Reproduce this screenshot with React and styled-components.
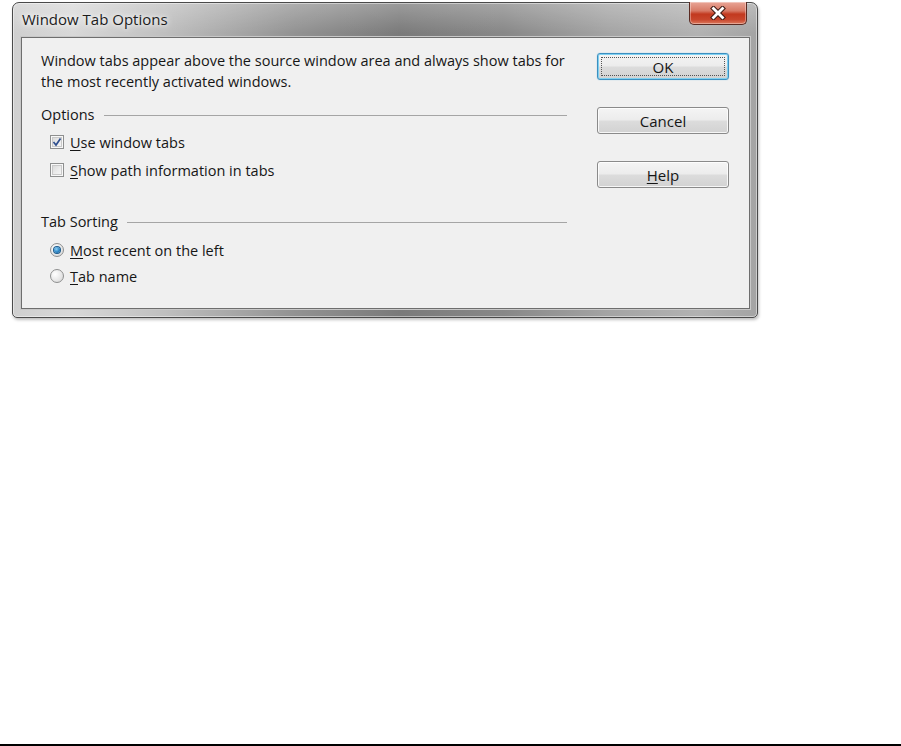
import React from "react";
import styled, { createGlobalStyle } from "styled-components";

const Global = createGlobalStyle`
  html, body { margin: 0; padding: 0; background: #fff; }
  body { font-family: "Open Sans", "Noto Sans", "Liberation Sans", sans-serif; }
`;

const Page = styled.div`
  box-sizing: border-box;
  height: 746px;
  padding: 2px 0 0 12px;
  border-bottom: 2px solid #000;
`;

const Window = styled.div`
  box-sizing: border-box;
  width: 746px;
  height: 316px;
  display: flex;
  flex-direction: column;
  border: 1px solid #4a4a4a;
  border-radius: 7px 7px 5px 5px;
  background:
    linear-gradient(180deg, rgba(255,255,255,0.25) 0px, rgba(255,255,255,0) 30px),
    linear-gradient(90deg, #cfcfcf 0%, #d8d8d8 8%, #c0c0c0 20%, #929292 38%, #7a7a7a 52%, #888 66%, #a4a4a4 80%, #b2b2b2 92%, #a4a4a4 100%);
  box-shadow: inset 0 0 0 1px rgba(255,255,255,0.45), 1px 2px 3px rgba(0,0,0,0.25);
`;

const TitleBar = styled.div`
  height: 34px;
  display: flex;
  align-items: flex-start;
  justify-content: space-between;
  padding: 0 9px 0 9px;
`;

const Title = styled.div`
  margin-top: 6px;
  font-size: 15px;
  color: #1c1c1c;
  text-shadow: 0 0 8px #fff, 0 0 4px #fff;
`;

const CloseButton = styled.div`
  box-sizing: border-box;
  width: 58px;
  height: 23px;
  margin-top: -1px;
  margin-right: 1px;
  border: 1px solid #5a2a22;
  border-top: none;
  border-radius: 0 0 5px 5px;
  background: linear-gradient(180deg, #e9a596 0%, #d77a66 40%, #c2391f 55%, #c8462c 80%, #dc7a5e 100%);
  box-shadow: inset 0 0 0 1px rgba(255,255,255,0.35);
  display: flex;
  align-items: center;
  justify-content: center;
`;

const Client = styled.div`
  box-sizing: border-box;
  flex: 1;
  margin: 0 7px 8px 8px;
  border: 1px solid #6e6e6e;
  background: #f0f0f0;
  display: flex;
  justify-content: space-between;
  padding: 0 20px 0 19px;
  box-shadow: 0 0 0 1px #c8c8c8;
`;

const LeftColumn = styled.div`
  width: 526px;
  display: flex;
  flex-direction: column;
  font-size: 14.5px;
  color: #161616;
`;

const Description = styled.p`
  margin: 12px 0 0 0;
  line-height: 21px;
  white-space: nowrap;
`;

const GroupHeader = styled.div`
  display: flex;
  align-items: center;
  gap: 9px;
  margin-top: ${(p) => p.$top}px;
  height: 20px;
  &::after {
    content: "";
    flex: 1;
    height: 1px;
    background: #a5a5a5;
    margin-top: 2px;
  }
`;

const OptionRow = styled.label`
  display: flex;
  align-items: center;
  gap: 6px;
  margin-left: 9px;
  height: 20px;
  margin-top: ${(p) => p.$top}px;
`;

const Box = styled.span`
  box-sizing: border-box;
  width: 14px;
  height: 14px;
  border: 1px solid #8e8f8f;
  background: linear-gradient(135deg, #d4d4d4 0%, #ececec 55%, #fafafa 100%);
  box-shadow: inset 0 0 0 1px #f8f8f8, inset 0 0 0 2px #c9c9c9;
  display: flex;
  align-items: center;
  justify-content: center;
`;

const Radio = styled.span`
  box-sizing: border-box;
  width: 14px;
  height: 14px;
  border-radius: 50%;
  border: 1px solid #8e8f8f;
  background: radial-gradient(circle at 35% 35%, #fff 0%, #e6e6e6 60%, #cfcfcf 100%);
  display: flex;
  align-items: center;
  justify-content: center;
  &::after {
    content: "";
    display: ${(p) => (p.$on ? "block" : "none")};
    width: 6px;
    height: 6px;
    border-radius: 50%;
    background: radial-gradient(circle at 40% 35%, #8fd0f5 0%, #2a85c5 55%, #0d4f8a 100%);
    box-shadow: 0 0 0 1px #1b5a8c;
  }
`;

const Mn = styled.u`
  text-decoration: underline;
  text-underline-offset: 2px;
`;

const RightColumn = styled.div`
  display: flex;
  flex-direction: column;
  gap: 27px;
  padding-top: 15px;
`;

const Button = styled.div`
  box-sizing: border-box;
  width: 132px;
  height: 27px;
  border: 1px solid ${(p) => (p.$default ? "#3c8fc0" : "#8a8a8a")};
  border-radius: 3px;
  background: linear-gradient(180deg, #f4f4f4 0%, #ececec 48%, #dcdcdc 52%, #d2d2d2 100%);
  box-shadow: ${(p) =>
    p.$default
      ? "inset 0 0 0 1px #7fd0f0, 0 0 1px #6ab8e0"
      : "inset 0 0 0 1px rgba(255,255,255,0.8)"};
  display: flex;
  align-items: center;
  justify-content: center;
  font-size: 15px;
  color: #161616;
  position: relative;
  &::before {
    content: "";
    display: ${(p) => (p.$default ? "block" : "none")};
    position: absolute;
    inset: 3px;
    border: 1px dotted #555;
  }
`;

function CheckMark() {
  return (
    <svg width="10" height="10" viewBox="0 0 10 10">
      <path d="M1.5 5 L4 8 L8.5 1.5" fill="none" stroke="#2f4f8f" strokeWidth="1.7" />
    </svg>
  );
}

function CloseX() {
  return (
    <svg width="18" height="14" viewBox="0 0 18 14">
      <path d="M4.5 2.5 L13.5 11.5 M13.5 2.5 L4.5 11.5" stroke="#3b1a14" strokeWidth="4.8" strokeLinecap="square" />
      <path d="M4.5 2.5 L13.5 11.5 M13.5 2.5 L4.5 11.5" stroke="#fff" strokeWidth="2.8" strokeLinecap="square" />
    </svg>
  );
}

export default function App() {
  return (
    <>
      <Global />
      <Page>
        <Window>
          <TitleBar>
            <Title>Window Tab Options</Title>
            <CloseButton>
              <CloseX />
            </CloseButton>
          </TitleBar>
          <Client>
            <LeftColumn>
              <Description>
                Window tabs appear above the source window area and always show tabs for
                <br />
                the most recently activated windows.
              </Description>
              <GroupHeader $top={12}>Options</GroupHeader>
              <OptionRow $top={8}>
                <Box>
                  <CheckMark />
                </Box>
                <span>
                  <Mn>U</Mn>se window tabs
                </span>
              </OptionRow>
              <OptionRow $top={8}>
                <Box />
                <span>
                  <Mn>S</Mn>how path information in tabs
                </span>
              </OptionRow>
              <GroupHeader $top={31}>Tab Sorting</GroupHeader>
              <OptionRow $top={9}>
                <Radio $on />
                <span>
                  <Mn>M</Mn>ost recent on the left
                </span>
              </OptionRow>
              <OptionRow $top={6}>
                <Radio />
                <span>
                  <Mn>T</Mn>ab name
                </span>
              </OptionRow>
            </LeftColumn>
            <RightColumn>
              <Button $default>OK</Button>
              <Button>Cancel</Button>
              <Button>
                <span>
                  <Mn>H</Mn>elp
                </span>
              </Button>
            </RightColumn>
          </Client>
        </Window>
      </Page>
    </>
  );
}
